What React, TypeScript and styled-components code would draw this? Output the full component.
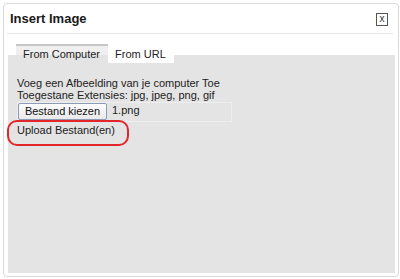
import React from 'react'
import styled, {createGlobalStyle} from 'styled-components'

const GlobalStyle = createGlobalStyle`
  html, body {
    margin: 0;
    padding: 0;
    background: #ffffff;
  }
  body {
    font-family: "Liberation Sans", Arial, sans-serif;
    font-size: 11px;
    color: #222;
  }
`

const Page = styled.div`
  width: 400px;
  height: 279px;
  padding: 3px 0 0 3px;
  box-sizing: border-box;
`

const Dialog = styled.div`
  position: relative;
  width: 396px;
  height: 274px;
  box-sizing: border-box;
  border: 1px solid #d9d9d9;
  border-radius: 4px;
  background: #fff;
  display: flex;
  flex-direction: column;
  padding: 0 3px 3px 4px;
`

const Header = styled.div`
  display: flex;
  align-items: center;
  justify-content: space-between;
  margin: 0 2px 0 -1px;
  padding: 7px 5px 6px 3px;
  border-bottom: 1px solid #e6e6e6;
`

const Title = styled.div`
  font-weight: bold;
  font-size: 13px;
  line-height: 16px;
  color: #1a1a1a;
`

const CloseButton = styled.div`
  width: 10px;
  height: 11px;
  border: 1px solid #555;
  font-size: 10px;
  line-height: 10px;
  text-align: center;
  color: #333;
`

const TabRow = styled.div`
  display: flex;
  align-items: flex-start;
  height: 11px;
  margin: 10px 0 0 8px;
  position: relative;
  z-index: 1;
`

const Tab = styled.div<{active?: boolean}>`
  box-sizing: border-box;
  padding: 1px 8px 0 7px;
  line-height: 14px;
  font-size: 11px;
  color: #222;
  white-space: nowrap;
  height: ${p => (p.active ? '11px' : '19px')};
  background: ${p => (p.active ? '#efefef' : '#ffffff')};
  border-top: 2px solid ${p => (p.active ? '#c6c6c6' : '#ffffff')};
`

const Panel = styled.div`
  flex: 1;
  background: #e4e4e4;
  padding: 22px 9px 0;
`

const Line = styled.div`
  line-height: 12px;
  white-space: nowrap;
`

const FileBox = styled.div`
  display: flex;
  align-items: flex-start;
  width: 215px;
  height: 20px;
  box-sizing: border-box;
  border: 1px solid #eeeeee;
  margin-top: 1px;
`

const FileButton = styled.div`
  box-sizing: border-box;
  width: 89px;
  height: 17px;
  border: 1px solid #8c9bb8;
  border-radius: 2px;
  background: linear-gradient(#fdfdfd, #e9e9e9);
  font-size: 11px;
  line-height: 15px;
  text-align: center;
  color: #111;
`

const FileName = styled.div`
  margin-left: 5px;
  line-height: 15px;
`

const UploadLink = styled.div`
  margin-top: 2px;
  line-height: 12px;
  color: #222;
`

const Annotation = styled.div`
  position: absolute;
  left: 3px;
  top: 116px;
  width: 122px;
  height: 26px;
  box-sizing: border-box;
  border: 2px solid #e3262b;
  border-radius: 10px;
  pointer-events: none;
`

export default function App() {
  return (
    <Page>
      <GlobalStyle />
      <Dialog>
        <Header>
          <Title>Insert Image</Title>
          <CloseButton>x</CloseButton>
        </Header>
        <TabRow>
          <Tab active>From Computer</Tab>
          <Tab>From URL</Tab>
        </TabRow>
        <Panel>
          <Line>Voeg een Afbeelding van je computer Toe</Line>
          <Line>Toegestane Extensies: jpg, jpeg, png, gif</Line>
          <FileBox>
            <FileButton>Bestand kiezen</FileButton>
            <FileName>1.png</FileName>
          </FileBox>
          <UploadLink>Upload Bestand(en)</UploadLink>
        </Panel>
        <Annotation />
      </Dialog>
    </Page>
  )
}
